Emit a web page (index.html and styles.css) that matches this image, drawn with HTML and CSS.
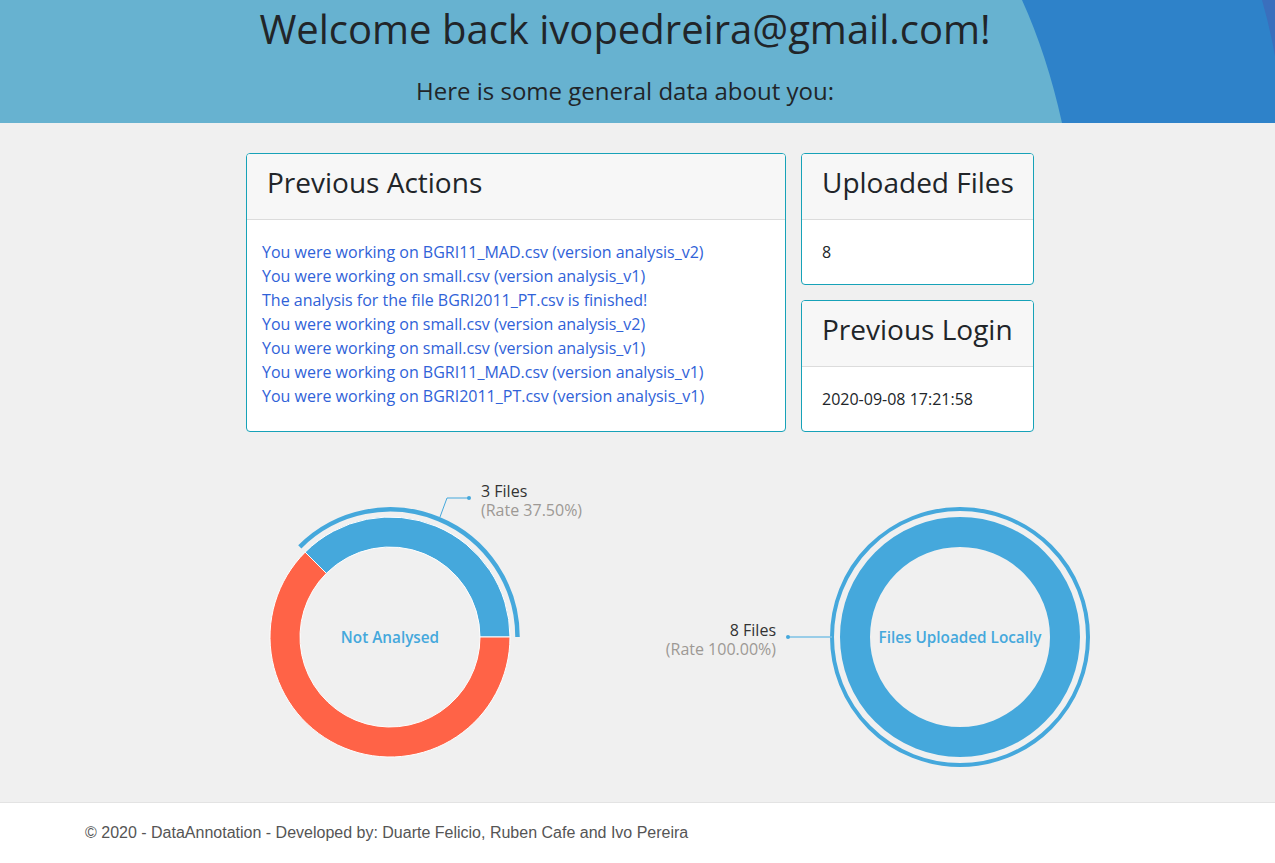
FILE: index.html
```html
<!DOCTYPE html>
<html lang="en">
<head>
<meta charset="utf-8">
<title>DataAnnotation - Home</title>
<link rel="stylesheet" href="styles.css">
</head>
<body>
<header class="hero">
  <svg class="hero-bg" viewBox="0 0 1275 123" preserveAspectRatio="none" aria-hidden="true">
    <path d="M1022,0 Q1047,55 1062,123 L1275,123 L1275,0 Z" fill="#2e82c9"/>
    <path d="M1262,0 Q1270,28 1275,56 L1275,0 Z" fill="#3a6fbd"/>
  </svg>
  <h1 class="hero-title">Welcome back ivopedreira@gmail.com!</h1>
  <p class="hero-sub">Here is some general data about you:</p>
</header>

<main class="main">
  <section class="cards">
    <div class="card card-wide">
      <div class="card-header"><h3 class="card-title">Previous Actions</h3></div>
      <div class="card-body actions">
        <a class="action" href="#">You were working on BGRI11_MAD.csv (version analysis_v2)</a>
        <a class="action" href="#">You were working on small.csv (version analysis_v1)</a>
        <a class="action" href="#">The analysis for the file BGRI2011_PT.csv is finished!</a>
        <a class="action" href="#">You were working on small.csv (version analysis_v2)</a>
        <a class="action" href="#">You were working on small.csv (version analysis_v1)</a>
        <a class="action" href="#">You were working on BGRI11_MAD.csv (version analysis_v1)</a>
        <a class="action" href="#">You were working on BGRI2011_PT.csv (version analysis_v1)</a>
      </div>
    </div>
    <div class="side">
      <div class="card">
        <div class="card-header"><h3 class="card-title">Uploaded Files</h3></div>
        <div class="card-body"><span class="value">8</span></div>
      </div>
      <div class="card">
        <div class="card-header"><h3 class="card-title">Previous Login</h3></div>
        <div class="card-body"><span class="value">2020-09-08 17:21:58</span></div>
      </div>
    </div>
  </section>

  <section class="charts">
    <svg class="chart chart-left" viewBox="0 0 360 330" width="360" height="330">
      <path d="M270,169 A120,120 0 0 0 65.15,84.15 L86.36,105.36 A90,90 0 0 1 240,169 Z" fill="#45a8dc" stroke="#fff" stroke-width="1"/>
      <path d="M65.15,84.15 A120,120 0 1 0 270,169 L240,169 A90,90 0 1 1 86.36,105.36 Z" fill="#ff6347" stroke="#fff" stroke-width="1"/>
      <path d="M277.5,169 A127.5,127.5 0 0 0 59.8,78.8" fill="none" stroke="#45a8dc" stroke-width="4.5"/>
      <polyline points="200,49 207,30 229,30" fill="none" stroke="#45a8dc" stroke-width="1"/>
      <circle cx="229" cy="30" r="2" fill="#45a8dc"/>
      <text class="lbl-main" x="241" y="29">3 Files</text>
      <text class="lbl-rate" x="241" y="47.5">(Rate 37.50%)</text>
      <text class="center-lbl" x="150" y="171">Not Analysed</text>
    </svg>
    <svg class="chart chart-right" viewBox="0 0 460 330" width="460" height="330">
      <circle cx="320" cy="169" r="105" fill="none" stroke="#45a8dc" stroke-width="30"/>
      <circle cx="320" cy="169" r="128" fill="none" stroke="#45a8dc" stroke-width="4"/>
      <line x1="148" y1="169" x2="192" y2="169" stroke="#7cc2e6" stroke-width="1.5"/>
      <circle cx="148" cy="169" r="2" fill="#45a8dc"/>
      <text class="lbl-main" x="136" y="168" text-anchor="end">8 Files</text>
      <text class="lbl-rate" x="136" y="187" text-anchor="end">(Rate 100.00%)</text>
      <text class="center-lbl" x="320" y="171">Files Uploaded Locally</text>
    </svg>
  </section>
</main>

<footer class="footer">
  <p class="footer-text">© 2020 - DataAnnotation - Developed by: Duarte Felicio, Ruben Cafe and Ivo Pereira</p>
</footer>
</body>
</html>
```

FILE: styles.css
```css
* { box-sizing: border-box; }

body {
  margin: 0;
  font-family: "Open Sans", "DejaVu Sans", sans-serif;
  color: #212529;
  background: #f0f0f0;
  display: flex;
  flex-direction: column;
  min-height: 100vh;
}

.hero {
  position: relative;
  flex-shrink: 0;
  height: 123px;
  padding-right: 25px;
  background: #67b2d0;
  text-align: center;
  overflow: hidden;
}

.hero-bg {
  position: absolute;
  left: 0;
  top: 0;
  width: 100%;
  height: 100%;
}

.hero-title {
  position: relative;
  margin: 0;
  padding-top: 5px;
  font-size: 40px;
  font-weight: 400;
  line-height: 48px;
  color: #212529;
}

.hero-sub {
  position: relative;
  margin: 20px 0 0;
  font-size: 24px;
  line-height: 36px;
  color: #212529;
}

.main {
  flex: 1 0 auto;
  display: flex;
  flex-direction: column;
}

.cards {
  display: flex;
  gap: 15px;
  width: 788px;
  margin: 30px 0 0 calc(50% - 391.5px);
}

.card {
  background: #fff;
  border: 1px solid #17a2b8;
  border-radius: 4px;
  overflow: hidden;
}

.card-wide {
  width: 540px;
}

.side {
  width: 233px;
  display: flex;
  flex-direction: column;
  gap: 15px;
}

.card-header {
  background: #f7f7f7;
  border-bottom: 1px solid #dcdcdc;
  padding: 12px 20px;
}

.card-title {
  margin: 0 0 7.4px;
  font-size: 28px;
  font-weight: 400;
  line-height: 1.2;
  color: #212529;
  white-space: nowrap;
}

.card-body {
  padding: 20px;
  display: flex;
  flex-direction: column;
}

.actions {
  padding-left: 15px;
}

.action {
  font-size: 16px;
  line-height: 24px;
  color: #3062d8;
  text-decoration: none;
}

.value {
  font-size: 16px;
  line-height: 24px;
  color: #212529;
}

.charts {
  display: flex;
  gap: 40px;
  padding-left: 240px;
  margin-top: 36px;
}

.chart {
  display: block;
  overflow: visible;
}

.lbl-main {
  font-family: "Open Sans", sans-serif;
  font-size: 16px;
  fill: #333;
}

.lbl-rate {
  font-family: "Open Sans", sans-serif;
  font-size: 16px;
  fill: #9d9995;
}

.center-lbl {
  font-family: "Open Sans", sans-serif;
  font-size: 15.3px;
  font-weight: 600;
  fill: #45a8dc;
  text-anchor: middle;
  dominant-baseline: middle;
}

.footer {
  flex-shrink: 0;
  height: 61px;
  background: #fff;
  border-top: 1px solid #e3e3e3;
  display: flex;
  align-items: center;
  padding-left: 85px;
}

.footer-text {
  margin: 0;
  font-family: "Liberation Sans", Arial, sans-serif;
  font-size: 16px;
  color: #555;
}
```
